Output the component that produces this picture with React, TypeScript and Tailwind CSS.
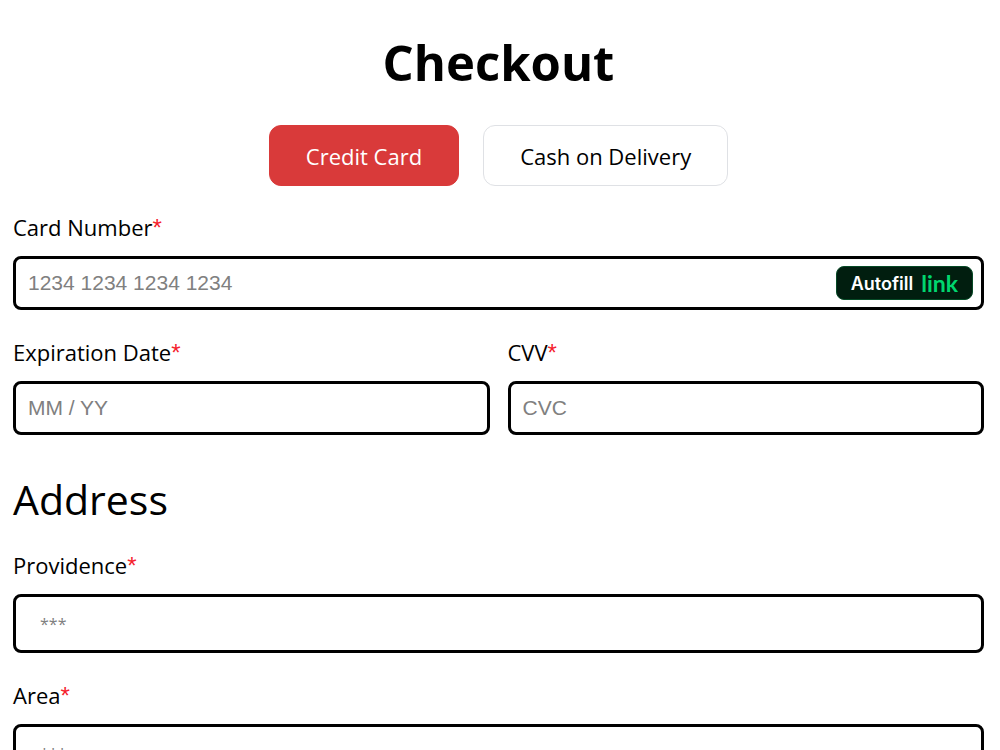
import { useState } from "react"
import type { ReactNode } from "react"
import clsx from "clsx"

type PaymentMethod = "card" | "cash"

type FieldProps = {
  id: string
  label: string
  placeholder: string
  variant?: "card" | "address"
  children?: ReactNode
}

function Field({ id, label, placeholder, variant = "card", children }: FieldProps) {
  return (
    <div className="flex flex-col gap-3">
      <label htmlFor={id} className="h-[34px] text-[22px] leading-[34px]">
        {label}
        <span className="font-['Liberation_Sans',Arial,sans-serif] text-[24px] leading-none text-[#f5222d]">*</span>
      </label>
      <div
        className={clsx(
          "flex items-center rounded-lg border-3 border-black bg-white",
          variant === "card" ? "h-[54px] pl-3 pr-2" : "h-[59px] px-6"
        )}
      >
        <input
          id={id}
          type="text"
          placeholder={placeholder}
          className={clsx(
            "min-w-0 flex-1 bg-transparent outline-none",
            variant === "card"
              ? "font-['Liberation_Sans',Arial,sans-serif] text-[21px] placeholder:text-[#808080]"
              : "text-[16px] placeholder:text-[#808080]"
          )}
        />
        {children}
      </div>
    </div>
  )
}

function AutofillButton() {
  return (
    <button
      type="button"
      className="flex h-[34px] flex-shrink-0 items-center gap-2 rounded-lg border border-[#064a26] bg-[#011e0f] px-[14px] font-['Inter',sans-serif] text-[18px] font-semibold text-white"
    >
      Autofill
      <span className="font-['Lato',sans-serif] text-[23px] font-bold leading-none text-[#00d66f]">link</span>
    </button>
  )
}

function App() {
  const [method, setMethod] = useState<PaymentMethod>("card")

  const methodClass = (value: PaymentMethod) =>
    clsx(
      "h-[61px] rounded-xl border px-9 pt-0.5 text-[22px]",
      method === value
        ? "border-[#d93a3a] bg-[#d93a3a] text-white"
        : "border-[#dfe1e5] bg-white text-black"
    )

  return (
    <div className="h-screen overflow-hidden bg-white pl-[13px] pr-4 pt-[26px] font-['Open_Sans','Noto_Sans',sans-serif] text-black">
      <h1 className="text-center text-[49px] font-bold leading-[72px]">Checkout</h1>

      <div className="mt-[27px] flex justify-center gap-6">
        <button type="button" className={methodClass("card")} onClick={() => setMethod("card")}>
          Credit Card
        </button>
        <button type="button" className={methodClass("cash")} onClick={() => setMethod("cash")}>
          Cash on Delivery
        </button>
      </div>

      <form className="mt-6 flex flex-col gap-[25px]">
        {method === "card" && (
          <>
            <Field id="card-number" label="Card Number" placeholder="1234 1234 1234 1234">
              <AutofillButton />
            </Field>
            <div className="grid grid-cols-2 gap-[18px]">
              <Field id="expiration" label="Expiration Date" placeholder="MM / YY" />
              <Field id="cvv" label="CVV" placeholder="CVC" />
            </div>
          </>
        )}

        <h2 className="mt-4 text-[41px] leading-[47px]">Address</h2>
        <Field id="providence" label="Providence" placeholder="***" variant="address" />
        <Field id="area" label="Area" placeholder="***" variant="address" />
      </form>
    </div>
  )
}

export default App
